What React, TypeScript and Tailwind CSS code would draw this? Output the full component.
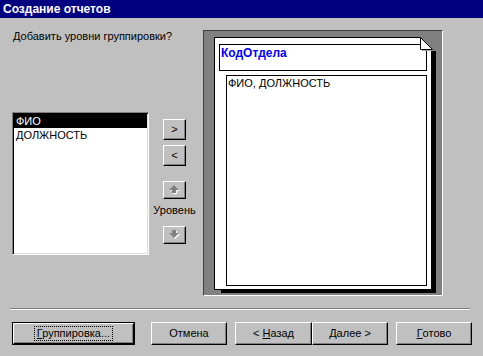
import type { ReactNode } from "react";

const bevel =
  "bg-[#c0c0c0] border border-t-white border-l-white border-r-black border-b-black shadow-[inset_-1px_-1px_0_#808080] flex items-center justify-center text-[11px] leading-[13px] text-black";

function Btn({ w, children }: { w: string; children: ReactNode }) {
  return <button className={`${w} h-[23px] shrink-0 ${bevel}`}>{children}</button>;
}

function ArrowIcon({ down }: { down?: boolean }) {
  const pts = down
    ? "3,0 7,0 7,3 10,3 5,8 0,3 3,3"
    : "5,0 10,5 7,5 7,8 3,8 3,5 0,5";
  return (
    <svg width="12" height="10" viewBox="0 0 12 10">
      <polygon points={pts} fill="#ffffff" transform="translate(1,1)" />
      <polygon points={pts} fill="#808080" />
    </svg>
  );
}

export default function App() {
  return (
    <div
      className="w-[483px] h-[356px] bg-[#c0c0c0] flex flex-col overflow-hidden text-black"
      style={{ fontFamily: '"Liberation Sans", Arial, sans-serif' }}
    >
      {/* Title bar */}
      <div className="h-[18px] bg-[#000080] text-white font-bold text-[12px] leading-[18px] pl-[3px] shrink-0">
        Создание отчетов
      </div>

      <div className="flex pt-[12px]">
        {/* Left side */}
        <div className="w-[203px] shrink-0 flex flex-col">
          <p className="ml-[13px] text-[11px] leading-[13px]">Добавить уровни группировки?</p>
          <div className="flex items-start mt-[69px]">
            <div className="ml-[12px] w-[137px] h-[143px] bg-white border border-t-[#808080] border-l-[#808080] border-r-white border-b-white shadow-[inset_1px_1px_0_#000,inset_-1px_-1px_0_#dfdfdf] p-[1px] text-[11px]">
              <div className="h-[14px] leading-[14px] bg-black text-white px-[2px]">ФИО</div>
              <div className="h-[14px] leading-[14px] px-[2px]">ДОЛЖНОСТЬ</div>
            </div>
            <div className="ml-[4px] w-[43px] flex flex-col items-center">
              <button className={`mt-[7px] w-[23px] h-[21px] ${bevel}`}>&gt;</button>
              <button className={`mt-[5px] w-[23px] h-[21px] ${bevel}`}>&lt;</button>
              <button className={`mt-[15px] w-[23px] h-[18px] ${bevel}`}>
                <ArrowIcon />
              </button>
              <span className="mt-[5px] text-[11px] leading-[13px]">Уровень</span>
              <button className={`mt-[9px] w-[23px] h-[18px] ${bevel}`}>
                <ArrowIcon down />
              </button>
            </div>
          </div>
        </div>

        {/* Preview */}
        <div className="w-[240px] h-[266px] shrink-0 bg-[#808080] border border-t-[#404040] border-l-[#404040] border-r-white border-b-white pl-[10px] pt-[6px]">
          <div className="relative w-[218px] h-[253px] bg-white border border-black flex flex-col">
            <div className="absolute left-[217px] top-[13px] w-[4px] h-[242px] bg-black" />
            <div className="absolute left-[6px] top-[252px] w-[215px] h-[3px] bg-black" />
            <svg className="absolute left-[205px] -top-px" width="13" height="15" viewBox="0 0 13 15">
              <polygon points="0,0 13,0 13,13" fill="#808080" />
              <polygon points="0.5,0.5 0.5,12.5 12.5,12.5" fill="#ffffff" stroke="#000" strokeWidth="1" />
              <line x1="2" y1="13.5" x2="13" y2="13.5" stroke="#a0a0a0" strokeWidth="1" />
            </svg>
            <div className="ml-[4px] mt-[6px] w-[208px] h-[27px] border border-black pl-[1px] pt-[1px] text-[12px] leading-[14px] font-bold text-[#0000ff]">
              КодОтдела
            </div>
            <div className="ml-[11px] mt-[4px] w-[201px] h-[211px] border border-black pl-[1px] pt-[1px] text-[11px] leading-[13px]">
              ФИО, ДОЛЖНОСТЬ
            </div>
          </div>
        </div>
      </div>

      {/* Separator */}
      <div className="mt-[12px] ml-[10px] w-[460px] h-[2px] border-t border-t-[#808080] border-b border-b-white shrink-0" />

      {/* Buttons */}
      <div className="mt-[12px] ml-[12px] flex">
        <div className="w-[123px] h-[23px] border border-black flex shrink-0">
          <button className={`flex-1 ${bevel}`}>
            <span className="outline-1 outline-dotted outline-black px-[2px]">
              <span className="underline">Г</span>руппировка...
            </span>
          </button>
        </div>
        <div className="ml-[16px] flex">
          <Btn w="w-[76px]">Отмена</Btn>
        </div>
        <div className="ml-[8px] flex">
          <Btn w="w-[77px]">
            &lt;&nbsp;<span className="underline">Н</span>азад
          </Btn>
          <Btn w="w-[76px]">
            <span className="underline">Д</span>алее &gt;
          </Btn>
        </div>
        <div className="ml-[8px] flex">
          <Btn w="w-[76px]">
            <span className="underline">Г</span>отово
          </Btn>
        </div>
      </div>
    </div>
  );
}
